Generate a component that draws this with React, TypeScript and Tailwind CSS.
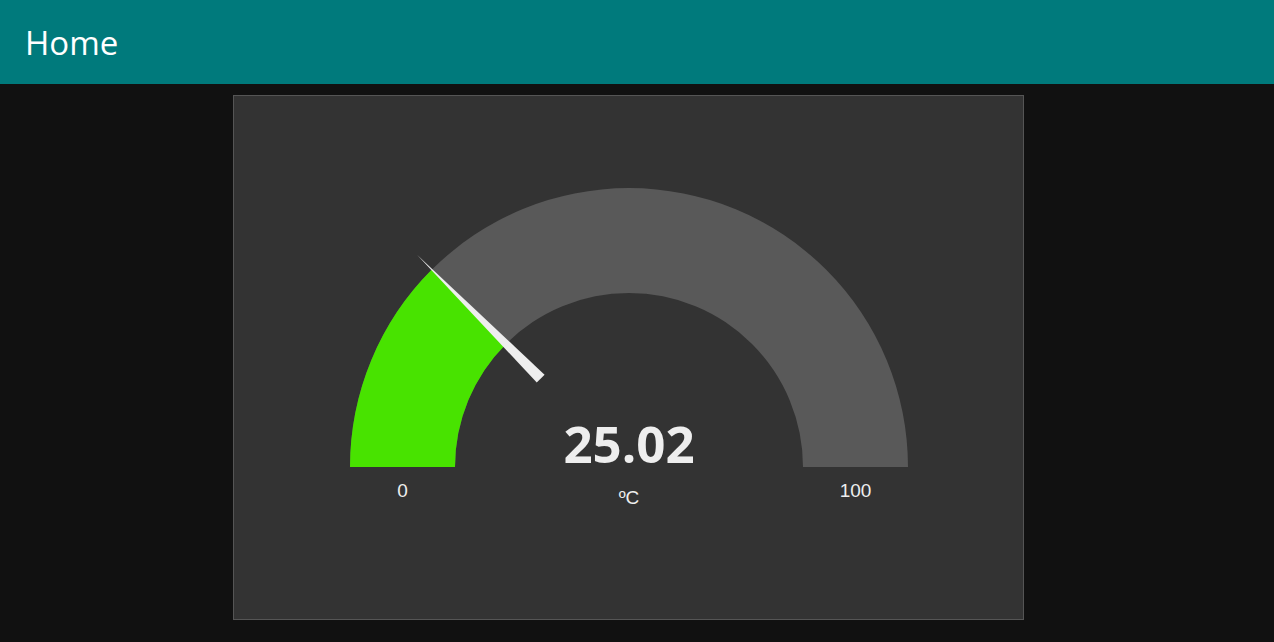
import React from "react";

const CX = 395;
const CY = 371;
const RO = 279;
const RI = 174;

function polar(r: number, deg: number) {
  const a = (deg * Math.PI) / 180;
  return [CX + r * Math.cos(a), CY - r * Math.sin(a)];
}

function Gauge({ value, min, max, unit }: { value: number; min: number; max: number; unit: string }) {
  const angle = 180 - ((value - min) / (max - min)) * 180;
  const [ox, oy] = polar(RO, angle);
  const [ix, iy] = polar(RI, angle);
  const track = `M ${CX - RO} ${CY} A ${RO} ${RO} 0 0 1 ${CX + RO} ${CY} L ${CX + RI} ${CY} A ${RI} ${RI} 0 0 0 ${CX - RI} ${CY} Z`;
  const fill = `M ${CX - RO} ${CY} A ${RO} ${RO} 0 0 1 ${ox} ${oy} L ${ix} ${iy} A ${RI} ${RI} 0 0 0 ${CX - RI} ${CY} Z`;

  // pointer: thin wedge from outside the arc down towards the centre
  const [tx, ty] = polar(300, angle);
  const [bx, by] = polar(125, angle);
  const a = (angle * Math.PI) / 180;
  const px = Math.sin(a) * 5.5;
  const py = Math.cos(a) * 5.5;
  const needle = `M ${tx} ${ty} L ${bx + px} ${by + py} L ${bx - px} ${by - py} Z`;

  const label = "fill-[#eeeeee] text-[19px] font-['Liberation_Sans',Arial,sans-serif]";

  return (
    <svg width="789" height="523" viewBox="0 0 789 523" className="block">
      <path d={track} fill="#595959" />
      <path d={fill} fill="#48e300" />
      <path d={needle} fill="#eeeeee" />
      <text
        x={CX}
        y={367}
        textAnchor="middle"
        className="fill-[#eeeeee] text-[51px] font-bold font-['Open_Sans','Noto_Sans',sans-serif]"
      >
        {value.toFixed(2)}
      </text>
      <text x={CX} y={408} textAnchor="middle" className={label}>
        {unit}
      </text>
      <text x={CX - (RO + RI) / 2} y={401} textAnchor="middle" className={label}>
        {min}
      </text>
      <text x={CX + (RO + RI) / 2} y={401} textAnchor="middle" className={label}>
        {max}
      </text>
    </svg>
  );
}

export default function App() {
  return (
    <div className="w-full h-[642px] bg-[#111111] overflow-hidden">
      <header className="h-[84px] bg-[#007a7c] flex items-center pl-[25px]">
        <h1 className="text-[33px] text-white font-['Open_Sans','Noto_Sans',sans-serif] leading-none">
          Home
        </h1>
      </header>
      <main className="pt-[11px] pl-[233px]">
        <div className="w-[791px] h-[525px] bg-[#333333] border border-[#555555]">
          <Gauge value={25.02} min={0} max={100} unit="ºC" />
        </div>
      </main>
    </div>
  );
}
